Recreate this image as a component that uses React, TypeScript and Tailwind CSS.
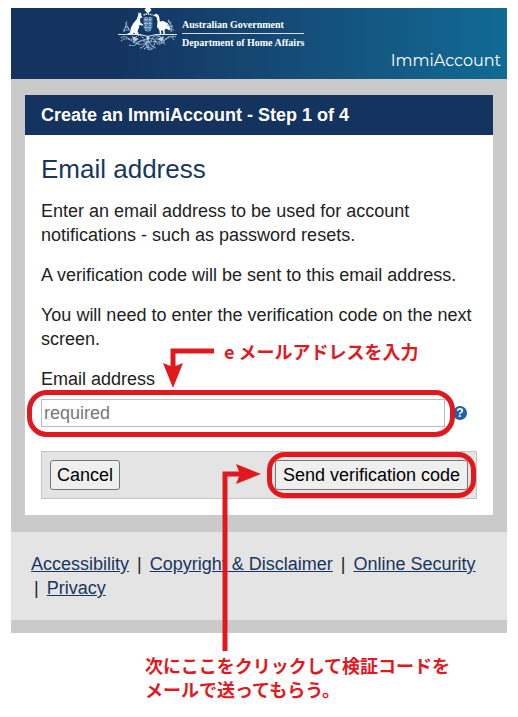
import { useState } from "react";

const links = ["Accessibility", "Copyright & Disclaimer", "Online Security", "Privacy"];

function Crest() {
  return (
    <svg viewBox="0 0 60 43" className="h-[43px] w-[60px] shrink-0" aria-hidden="true">
      {/* star */}
      <path d="M28 0h4l1.500 2-1.500 1.500L30 5.500 28 3.500 26.500 2z" fill="#fff" />
      <path d="M25.500 7q4.500-2 9 0" stroke="#dbe7f3" strokeWidth="1.500" fill="none" strokeDasharray="1.500 .6" />
      {/* kangaroo */}
      <path
        d="M20.500 4l1 1.500 1.500-1 .3 3 1 2-2.300 1 .3 4 2.700 2-.5 1.200-3-1-.5 3-1.500 3.300 1.500 3.500h-4l-.5-2-2.500 2-7 .6 5-2.500 1-5 2.500-4.500 3-3.500 1.500-3.500z"
        fill="#fff"
      />
      {/* emu */}
      <path
        d="M35 8l2.500-2.300 2.500.7 1.300 2.600.5 4.500 3.700-.5 4.500 2.500 2.500 4.500-1 2.500-3.500-2-1.500 1.500.5 5h-1.500l-.5-4.500h-2l.5 4.500H42l-.7-5-2.300-3 .5-5.500-1-4.500-1.500-.7z"
        fill="#fff"
      />
      {/* shield */}
      <path d="M25.500 9h9v9q0 4-4.500 6-4.500-2-4.500-6z" fill="#4a78a9" />
      <path d="M26 11.500h8M26 15.500h8M26.500 19.500h7M28 9v14M32 9v14" stroke="#c9d9ea" strokeWidth="0.900" strokeDasharray="1.500 1" />
      {/* wattle */}
      <path d="M0 26.500h22l8 2 8-2h21" fill="none" stroke="#dfe9f3" strokeWidth="1" />
      <g fill="none" stroke="#9fb7d1" strokeWidth="1.100" strokeDasharray="2 .6">
        <path d="M3 30q3-3 7 0t8-1 8 2 8 0 8-2 8 1 8-1" />
        <path d="M3 33q4-4 9-1t8 2 9-3 9 3 9-2 9 0" />
        <path d="M11 37q6 2 10-3t8 4 8-4 10 3M15 34q8 4 14 1t16 0" />
        <path d="M22 40q5-1 8-8 3 7 8 8M30 28v14M26 41l4-3 4 3" />
        <path d="M6 24l2-8 4 7M7 19l4 1M5 22h6M8 16l1-3M53 24l1-6-4-5M49 17l6 2M52 21l4 1M50 12l3 3" />
      </g>
      <path d="M14 28l7 3-5 3zM46 28l-7 3 5 3zM28 30l2-3 2 3-2 3z" fill="#bccde0" />
    </svg>
  );
}

export default function App() {
  const [email, setEmail] = useState("");

  return (
    <div className="px-[11px] pt-2 pb-4 font-['Liberation_Sans',Arial,sans-serif] text-[18px] leading-6 text-[#222]">
      <header className="flex h-[71px] justify-between bg-linear-to-r from-[#14335f] from-20% to-[#0f6b95] text-white">
        <div className="flex pl-[107px]">
          <Crest />
          <div className="ml-1 pt-[9px] font-['Liberation_Serif',serif] text-[10px] leading-4 font-bold whitespace-nowrap">
            <p className="border-b border-white/80">Australian Government</p>
            <p className="pt-px">Department of Home Affairs</p>
          </div>
        </div>
        <p className="self-end pr-[6px] pb-[6px] font-[Montserrat,Lato,sans-serif] text-[16px]">ImmiAccount</p>
      </header>

      <main className="bg-[#cacaca] px-[14px] pt-4 pb-[17px]">
        <section className="bg-white">
          <h1 className="bg-[#14335f] px-4 py-2 font-bold text-white">Create an ImmiAccount - Step 1 of 4</h1>

          <form className="px-4 pt-[18px] pb-4" onSubmit={(e) => e.preventDefault()}>
            <h2 className="mb-[14px] text-[26px] leading-8 text-[#17365f]">Email address</h2>
            <p className="mb-4">Enter an email address to be used for account notifications - such as password resets.</p>
            <p className="mb-4">A verification code will be sent to this email address.</p>
            <p className="mb-4">You will need to enter the verification code on the next screen.</p>

            <div className="relative">
              <label htmlFor="email" className="block pb-2">Email address</label>
              <div className="flex items-center gap-2">
                <input
                  id="email"
                  type="email"
                  placeholder="required"
                  value={email}
                  onChange={(e) => setEmail(e.target.value)}
                  className="block h-7 min-w-0 flex-1 border border-[#bbb] px-[2px] placeholder:text-[#777]"
                />
                <button type="button" aria-label="Help" className="mr-[10px] size-[14px] rounded-full bg-[#1c62ad] text-[12px] leading-[14px] font-bold text-white">
                  ?
                </button>
              </div>
              <span className="pointer-events-none absolute -bottom-[10px] -left-[14px] right-[22px] h-[47px] rounded-[20px] border-5 border-[#e1191f]" />
              <div className="absolute -top-5 left-[122px] flex items-start text-[#e1191f]">
                <svg viewBox="0 0 52 42" className="h-[42px] w-[52px]" aria-hidden="true">
                  <path d="M51 4H10v20" fill="none" stroke="currentColor" strokeWidth="5" />
                  <path d="M0 16l10 4 10-4-10 25z" fill="currentColor" />
                </svg>
                <p className="pl-[9px] font-['Noto_Sans_CJK_JP',sans-serif] text-[18px] leading-2 font-bold whitespace-nowrap">e メールアドレスを入力</p>
              </div>
            </div>

            <div className="mt-6 flex items-center justify-between border border-[#c4c4c4] bg-[#e4e4e4] p-2">
              <button type="button" className="rounded-[3px] border border-[#767676] bg-[#efefef] px-[6px] py-[2px] text-black">
                Cancel
              </button>
              <div className="relative">
                <button type="submit" className="block rounded-[3px] border border-[#767676] bg-[#efefef] px-[7px] py-[2px] text-black">
                  Send verification code
                </button>
                <span className="pointer-events-none absolute -inset-2 rounded-[18px] border-5 border-[#e1191f]" />
                <svg viewBox="0 0 40 188" className="pointer-events-none absolute top-[3px] right-full mr-[13px] h-[188px] w-[40px] max-w-none text-[#e1191f]" aria-hidden="true">
                  <path d="M3 188V11h17" fill="none" stroke="currentColor" strokeWidth="5" />
                  <path d="M14 1l4 10-4 10 25-10z" fill="currentColor" />
                </svg>
              </div>
            </div>
          </form>
        </section>
      </main>

      <footer className="border-b-[13px] border-[#cacaca] bg-[#e4e4e4] px-5 py-5">
        {links.map((link, i) => (
          <span key={link}>
            <span className="whitespace-nowrap">
              {i > 0 && <span className="pr-2 pl-[3px]">|</span>}
              <a href="#" className="text-[#17365f] underline">{link}</a>
            </span>{" "}
          </span>
        ))}
      </footer>

      <p className="mt-5 pl-[134px] font-['Noto_Sans_CJK_JP',sans-serif] text-[18px] font-bold whitespace-nowrap text-[#e1191f]">
        次にここをクリックして検証コードを
        <br />
        メールで送ってもらう。
      </p>
    </div>
  );
}
